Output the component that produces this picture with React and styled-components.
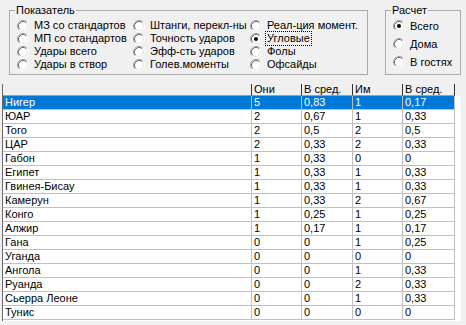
import React from 'react'
import styled, { createGlobalStyle } from 'styled-components'

const GlobalStyle = createGlobalStyle`
  body {
    margin: 0;
    background: #f0f0f0;
    font-family: "Liberation Sans", Arial, sans-serif;
    font-size: 11px;
    color: #000;
  }
`

const indicators = [
  'МЗ со стандартов', 'МП со стандартов', 'Удары всего', 'Удары в створ',
  'Штанги, перекл-ны', 'Точность ударов', 'Эфф-сть ударов', 'Голев.моменты',
  'Реал-ция момент.', 'Угловые', 'Фолы', 'Офсайды',
]

const modes = ['Всего', 'Дома', 'В гостях']

const columns = [
  { title: '', width: 249 },
  { title: 'Они', width: 50 },
  { title: 'В сред.', width: 51 },
  { title: 'Им', width: 50 },
  { title: 'В сред.', width: 52 },
]

const rows = [
  ['Нигер', '5', '0,83', '1', '0,17'],
  ['ЮАР', '2', '0,67', '1', '0,33'],
  ['Того', '2', '0,5', '2', '0,5'],
  ['ЦАР', '2', '0,33', '2', '0,33'],
  ['Габон', '1', '0,33', '0', '0'],
  ['Египет', '1', '0,33', '1', '0,33'],
  ['Гвинея-Бисау', '1', '0,33', '1', '0,33'],
  ['Камерун', '1', '0,33', '2', '0,67'],
  ['Конго', '1', '0,25', '1', '0,25'],
  ['Алжир', '1', '0,17', '1', '0,17'],
  ['Гана', '0', '0', '1', '0,25'],
  ['Уганда', '0', '0', '0', '0'],
  ['Ангола', '0', '0', '1', '0,33'],
  ['Руанда', '0', '0', '2', '0,33'],
  ['Сьерра Леоне', '0', '0', '1', '0,33'],
  ['Тунис', '0', '0', '0', '0'],
]

function RadioMark({ checked }) {
  return (
    <svg width="12" height="12" viewBox="0 0 12 12">
      <circle cx="6" cy="6" r="5" fill="#fff" />
      <path d="M2.11 9.89 A5.5 5.5 0 0 1 9.89 2.11" fill="none" stroke="#a0a0a0" />
      <path d="M9.89 2.11 A5.5 5.5 0 0 1 2.11 9.89" fill="none" stroke="#ffffff" />
      <path d="M2.82 9.18 A4.5 4.5 0 0 1 9.18 2.82" fill="none" stroke="#696969" />
      <path d="M9.18 2.82 A4.5 4.5 0 0 1 2.82 9.18" fill="none" stroke="#e3e3e3" />
      {checked && <circle cx="6" cy="6" r="2" fill="#000" />}
    </svg>
  )
}

function App() {
  return (
    <>
      <GlobalStyle />
      <Window>
        <Top>
          <Group $width={359}>
            <Legend>Показатель</Legend>
            <IndicatorList>
              {indicators.map((label) => (
                <Radio key={label} $height={13}>
                  <RadioMark checked={label === 'Угловые'} />
                  <Label $focused={label === 'Угловые'}>{label}</Label>
                </Radio>
              ))}
            </IndicatorList>
          </Group>
          <Group $width={76}>
            <Legend>Расчет</Legend>
            <ModeList>
              {modes.map((label) => (
                <Radio key={label} $height={18}>
                  <RadioMark checked={label === 'Всего'} />
                  <Label>{label}</Label>
                </Radio>
              ))}
            </ModeList>
          </Group>
        </Top>
        <Grid>
          <HeadRow>
            {columns.map((c, i) => (
              <HeadCell key={i} $w={c.width}>{c.title}</HeadCell>
            ))}
          </HeadRow>
          {rows.map((r, ri) => (
            <Row key={ri}>
              {r.map((v, ci) => (
                <Cell key={ci} $w={columns[ci].width} $selected={ri === 0}>{v}</Cell>
              ))}
            </Row>
          ))}
        </Grid>
      </Window>
    </>
  )
}

export default App

const Window = styled.div`
  width: 466px;
  height: 325px;
  overflow: hidden;
  background: #f0f0f0;
`
const Top = styled.div`
  display: flex;
  align-items: flex-start;
  gap: 17px;
  padding: 4px 0 0 9px;
`
const Group = styled.fieldset`
  margin: 0;
  width: ${p => p.$width}px;
  box-sizing: border-box;
  min-inline-size: 0;
  border: 1px solid #a9a9a9;
  padding: 0 5px 3px;
`
const Legend = styled.legend`
  padding: 0 1px;
  line-height: 13px;
  font-size: 11px;
`
const IndicatorList = styled.div`
  display: grid;
  grid-template-rows: repeat(4, 13px);
  grid-template-columns: 116px 117px auto;
  grid-auto-flow: column;
  padding: 2px 0 0 2px;
`
const ModeList = styled.div`
  display: flex;
  flex-direction: column;
  padding-left: 2px;
`
const Radio = styled.div`
  display: flex;
  align-items: center;
  gap: 5px;
  height: ${p => p.$height}px;
  white-space: nowrap;
  line-height: 13px;
`
const Label = styled.span`
  line-height: 11px;
  outline: ${p => (p.$focused ? '1px dotted #000' : 'none')};
  outline-offset: 1px;
`
const Grid = styled.div`
  width: 459px;
  height: 237px;
  margin: 9px 0 0 2px;
  box-sizing: border-box;
  border-left: 1px solid #696969;
  background: #fff;
`
const HeadRow = styled.div`
  display: flex;
  height: 12px;
  background: #f0f0f0;
`
const HeadCell = styled.div`
  width: ${p => p.$w}px;
  flex: none;
  box-sizing: border-box;
  border-right: 1px solid #333;
  border-bottom: 1px solid #a0a0a0;
  padding-left: 2px;
  line-height: 11px;
  white-space: nowrap;
`
const Row = styled.div`
  display: flex;
  height: 14px;
`
const Cell = styled.div`
  width: ${p => p.$w}px;
  flex: none;
  box-sizing: border-box;
  border-right: 1px solid #c0c0c0;
  border-bottom: 1px solid #c0c0c0;
  padding-left: 2px;
  line-height: 13px;
  white-space: nowrap;
  overflow: hidden;
  background: ${p => (p.$selected ? '#0078d7' : '#fff')};
  color: ${p => (p.$selected ? '#fff' : '#000')};
`
